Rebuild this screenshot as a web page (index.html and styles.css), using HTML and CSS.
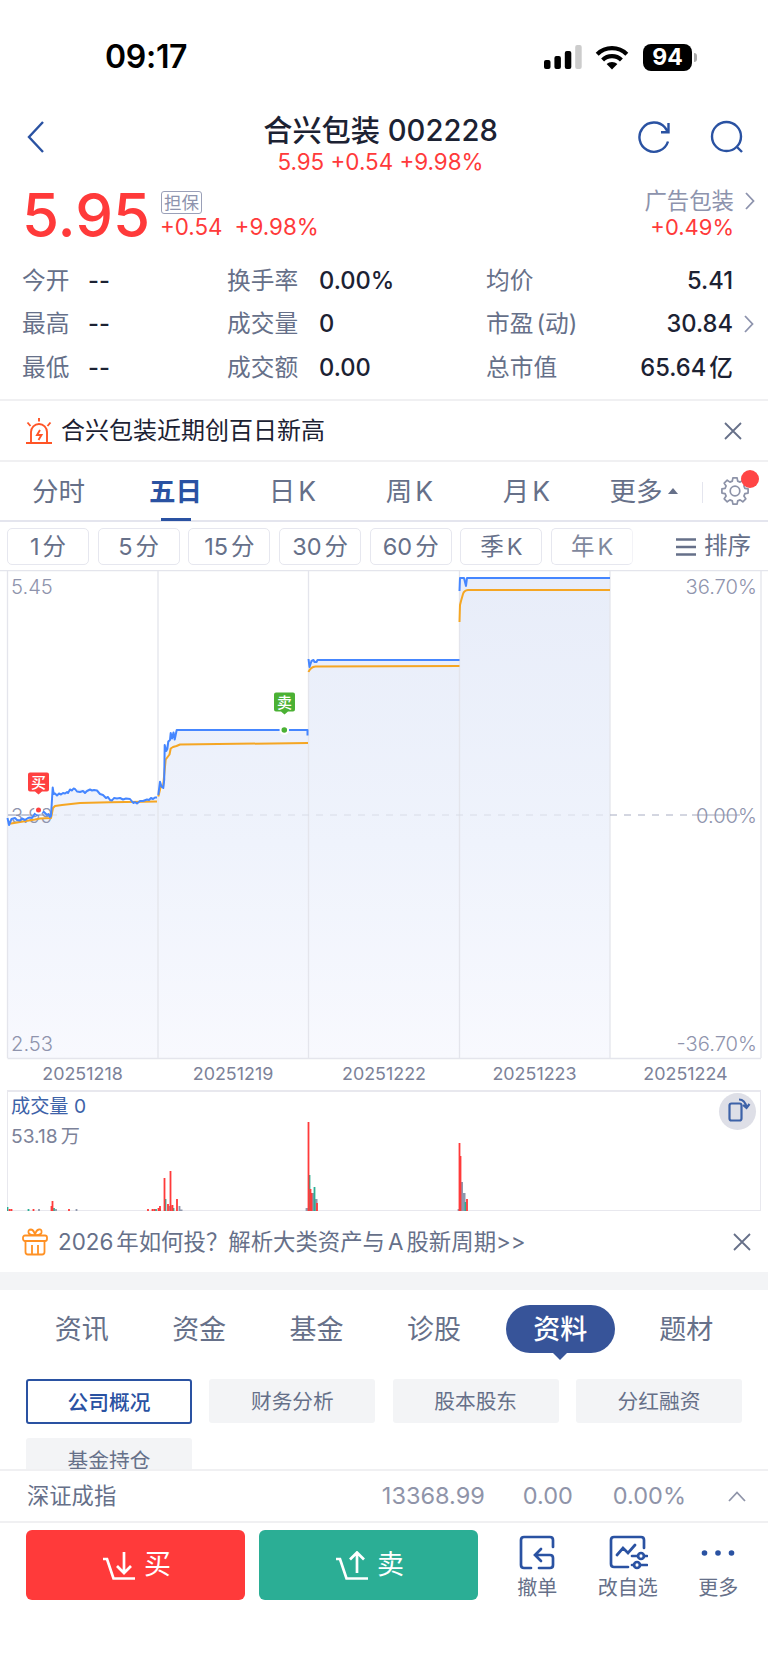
FILE: index.html
```html
<!DOCTYPE html>
<html lang="zh-CN">
<head>
  <meta charset="UTF-8" />
  <meta name="viewport" content="width=device-width, initial-scale=1.0" />
  <title>合兴包装 002228</title>
  <link rel="stylesheet" href="styles.css">
</head>
<body>
  <div class="status-bar">
    <span class="time">09:17</span>
    <svg class="signal" width="38" height="24" viewBox="0 0 38 24">
      <rect x="0" y="15" width="6.5" height="9" rx="2" />
      <rect x="10.4" y="11" width="6.5" height="13" rx="2" />
      <rect x="20.8" y="6" width="6.5" height="18" rx="2" />
      <rect x="31.2" y="0" width="6.5" height="24" rx="2" fill="#ccc" />
    </svg>
    <svg class="wifi" width="34" height="25" viewBox="0 0 34 25">
      <path d="M2.2 9.3a21 21 0 0 1 29.6 0M7.6 15a13.5 13.5 0 0 1 18.8 0" fill="none" stroke="#000" stroke-width="4.2" />
      <path d="M11.6 19a8 8 0 0 1 10.8 0L17 24.6z" />
    </svg>
    <span class="battery">94</span>
  </div>

  <header class="header">
    <svg width="18" height="34" viewBox="0 0 18 34"><path d="M16 2L2 17l14 15" /></svg>
    <div class="title">
      <h1>合兴包装 002228</h1>
      <p>5.95 +0.54 +9.98%</p>
    </div>
    <svg class="refresh" width="34" height="34" viewBox="0 0 34 34"><path d="M31 21.5A14.6 14.6 0 1 1 28 7.5L31 12M31.5 3v9.3H24" /></svg>
    <svg width="34" height="34" viewBox="0 0 34 34"><circle cx="16.5" cy="16.5" r="14.5" /><path d="M27 27l5 5" /></svg>
  </header>

  <section class="quote">
    <div class="price">5.95</div>
    <div class="change">
      <span class="tag">担保</span>
      <div><span>+0.54</span><span>+9.98%</span></div>
    </div>
    <div class="sector">
      <span class="name">广告包装</span>
      <span class="up">+0.49%</span>
    </div>
    <svg class="chevron" width="10" height="18" viewBox="0 0 10 18"><path d="M1 1l7.5 8L1 17" /></svg>
  </section>

  <section class="stats">
    <span>今开</span><b class="dash">--</b><span>换手率</span><b>0.00%</b><span>均价</span><b class="right">5.41</b><i></i>
    <span>最高</span><b class="dash">--</b><span>成交量</span><b>0</b><span>市盈<u>(动)</u></span><b class="right">30.84</b>
    <svg class="chevron" width="10" height="18" viewBox="0 0 10 18"><path d="M1 1l7.5 8L1 17" /></svg>
    <span>最低</span><b class="dash">--</b><span>成交额</span><b>0.00</b><span>总市值</span><b class="right">65.64<em>亿</em></b><i></i>
  </section>

  <section class="notice">
    <svg width="28" height="28" viewBox="0 0 28 28" fill="none" stroke="#ff5426" stroke-width="1.9">
      <path d="M1 26h26M6 26V15a8 8 0 0 1 16 0V26M14 1v3.5M2.5 5.5l3 3.5M25.5 5.5l-3 3.5" />
      <path d="M15 13l-3 5h4.5l-3 5" />
    </svg>
    <span>合兴包装近期创百日新高</span>
    <svg class="close" width="18" height="18" viewBox="0 0 18 18"><path d="M1 1l16 16M17 1L1 17" /></svg>
  </section>

  <nav class="chart-tabs">
    <span>分时</span>
    <span class="active">五日</span>
    <span>日<u>K</u></span>
    <span>周<u>K</u></span>
    <span>月<u>K</u></span>
    <span class="more">更多</span>
    <svg class="gear" width="30" height="30" viewBox="-15 -15 30 30">
      <path d="M-2.7-9.9L-2.1-13.1H2.1L2.7-9.9 5.1-8.9 7.8-10.8 10.8-7.8 8.9-5.1 9.9-2.7 13.1-2.1V2.1L9.9 2.7 8.9 5.1 10.8 7.8 7.8 10.8 5.1 8.9 2.7 9.9 2.1 13.1H-2.1L-2.7 9.9-5.1 8.9-7.8 10.8-10.8 7.8-8.9 5.1-9.9 2.7-13.1 2.1V-2.1L-9.9-2.7-8.9-5.1-10.8-7.8-7.8-10.8-5.1-8.9z" />
      <circle r="4.8" />
    </svg>
  </nav>

  <div class="periods">
    <span>1<u>分</u></span>
    <span>5<u>分</u></span>
    <span>15<u>分</u></span>
    <span>30<u>分</u></span>
    <span>60<u>分</u></span>
    <span>季<u>K</u></span>
    <span class="faded">年<u>K</u></span>
    <div class="sort">
      <svg width="20" height="18" viewBox="0 0 20 18"><path d="M0 1.5h20M0 9h20M0 16.5h20" /></svg>
      排序
    </div>
  </div>

  <!-- five day price chart -->
  <svg class="chart" width="768" height="521" viewBox="0 570 768 521">
    <defs>
      <linearGradient id="area" gradientUnits="userSpaceOnUse" x1="0" y1="580" x2="0" y2="1058">
        <stop offset="0" stop-color="#e8edf9" />
        <stop offset="0.55" stop-color="#eff3fc" />
        <stop offset="1" stop-color="#f8f9fe" />
      </linearGradient>
    </defs>
    <path fill="url(#area)" d="M8 1058V820L30 818 50 817 52.7 790 57 795 75 789 97 790.5 106 798 135 802 157 797.5 163.3 788 165 747 168 742 176.7 730H308.5V660H459.5V578H610V1058z" />
    <path class="grid" d="M7.5 571V1058M158 571V1058M308.5 571V1058M459.5 571V1058M610 571V1058M761 571V1058M7.5 1058.5H761M0 570.5H768" />
    <path class="zero" d="M8 815H610" stroke="#d8dce7" stroke-dasharray="7 7" />
    <path class="zero" d="M610 815H690" stroke="#a8adc2" stroke-dasharray="7 7" />
    <path class="zero" d="M692 815H740M8 815h42" stroke="#a0a5ba" />
    <g class="axis">
      <text x="11" y="593.5">5.45</text>
      <text x="11" y="822.5">3.99</text>
      <text x="11" y="1051">2.53</text>
      <text x="757" y="593.5" text-anchor="end">36.70%</text>
      <text x="757" y="822.5" text-anchor="end">0.00%</text>
      <text x="757" y="1051" text-anchor="end">-36.70%</text>
    </g>
    <g class="avg">
      <path d="M8 824L20 822 35 819.5 40 818.5 51 818 53 808 55 806 62 805 80 803 110 802.3 157 801.5" />
      <path d="M158.3 796.5L161 786 163 787 165.7 759.5 169.5 754.5 170.7 748.5 173 747 176.5 746 180 744.5 308 743" />
      <path d="M308.5 672q2-5 7-5.5l144-.5M459.5 622l.5-17 1-4 2-7q1-3.5 5-4H610" />
    </g>
    <g class="line">
      <path d="M7.5 818L9 825 11.5 819 15 818 17 820 20 820.5 22 818.5 25 820 28 818 30 817.5 32 818 35 813.5 37 815 39 814 42 812 44 812 47 815 48.5 814 50 817 51 816 52.7 787.5 53.7 794 55 793.5 57 795.5 59 793.5 61 794.5 63 793 65 793.5 67 792 68 793 70 789.5 72 790.5 73.5 788.5 75 789 77 791.5 80 792 83 791 85 793 87 791 90 789.5 92 790.5 94 790 97 790.5 100 794 103 795 106 798 108 797 110 800 112 800.5 114 798 117 798.5 120 798 123 799.5 126 798.5 130 799 132 801.5 133.5 803 135 802 137 803.5 140 801 143 801 147 799.5 149 800 151 798 153 799 155 797.5 157 797.5" />
      <path d="M158.3 795L160 781.7 161.5 786.5 163.3 788 164.2 780 164.7 745 166.2 751 167.3 749 168.3 741.5 170 740 170.7 733 172 738.5 173.5 732.5 174.7 739.5 176.7 730H307.5V735.6" />
      <path d="M308.5 659l1 8 2-6 2-1 1 2h2l1-2H459.5M459.5 591l.5-13H464l2 8 1-8H610" />
    </g>
    <g class="marker buy">
      <path d="M30 772.5h17a2 2 0 0 1 2 2v15a2 2 0 0 1-2 2h-5l-3.5 3-3.5-3h-5a2 2 0 0 1-2-2v-15a2 2 0 0 1 2-2z" />
      <circle cx="38.5" cy="810" r="3.5" />
      <text x="38.5" y="788">买</text>
    </g>
    <g class="marker sell">
      <path d="M276 692.5h17a2 2 0 0 1 2 2v15a2 2 0 0 1-2 2h-5l-3.5 3-3.5-3h-5a2 2 0 0 1-2-2v-15a2 2 0 0 1 2-2z" />
      <circle cx="284.3" cy="730" r="3.8" />
      <text x="284.5" y="708">卖</text>
    </g>
    <g class="dates">
      <text x="82.5" y="1079.5">20251218</text>
      <text x="233" y="1079.5">20251219</text>
      <text x="384" y="1079.5">20251222</text>
      <text x="534.5" y="1079.5">20251223</text>
      <text x="685.5" y="1079.5">20251224</text>
    </g>
  </svg>

  <div class="volume">
    <p class="vol-now">成交量 0</p>
    <p>53.18<u>万</u></p>
    <svg class="bars" width="754" height="121" viewBox="7 1090 754 121">
      <g stroke="#8f98ad">
        <path d="M39 1211v-2M76.5 1211v-2M56 1211v-2M179.5 1211v-5M306.5 1211v-3M308 1211v-3M458.5 1211v-2" />
        <path stroke-width="3" d="M313 1211v-18M316 1211v-12M461.5 1211v-29M464 1211v-18M170 1211v-5M181 1211v-1.5" />
      </g>
      <g stroke="#2bae95">
        <path d="M7.5 1211v-4M28.5 1211v-2M54 1211v-3M156 1211v-2M160 1211v-2M165.5 1211v-12M173.5 1211v-3M309.5 1211v-36M314.5 1211v-24M465.5 1211v-9" />
      </g>
      <g stroke="#ff3a3a">
        <path d="M9.5 1211v-2M11.5 1211v-2M33.5 1211v-2M52.5 1211v-10M51.5 1211v-5M69 1211v-2M148 1211v-2M152.5 1211v-2M154.5 1211v-2M158.5 1211v-3M160 1211v-5M164.5 1211v-33M168 1211v-7M170.5 1211v-40M172.5 1211v-6M177 1211v-12M308.5 1211v-89M310.5 1211v-22M311.5 1211v-18M317 1211v-8M459.5 1211v-68M460.5 1211v-55M467 1211v-12" />
      </g>
    </svg>
    <span class="rotate">
      <svg width="26" height="26" viewBox="0 0 26 26"><rect x="3.5" y="5.5" width="12" height="17" rx="2" /><path d="M13 1.5q6 0 7.5 8M17 7l3.5 3 3-4" /></svg>
    </span>
  </div>

  <section class="promo">
    <svg width="26" height="28" viewBox="0 0 26 28" fill="none" stroke="#ff9124" stroke-width="1.8">
      <rect x="1" y="7.5" width="24" height="5.5" rx="2" />
      <path d="M3.5 13v11q0 2.5 2.5 2.5h14q2.5 0 2.5-2.5V13M10 17v9M16 17v9M13 7Q7 7.5 6.5 4.5T9 1.5Q12 2 13 7Q14 2 17 1.5T19.5 4.5Q19 7.5 13 7" />
    </svg>
    <span>2026<u>年如何投？解析大类资产与</u><u>A</u><u>股新周期</u>&gt;&gt;</span>
    <svg class="close" width="18" height="18" viewBox="0 0 18 18"><path d="M1 1l16 16M17 1L1 17" /></svg>
  </section>

  <nav class="info-tabs">
    <span>资讯</span>
    <span>资金</span>
    <span>基金</span>
    <span>诊股</span>
    <span class="active">资料</span>
    <span>题材</span>
  </nav>

  <div class="chips">
    <span class="active">公司概况</span>
    <span>财务分析</span>
    <span>股本股东</span>
    <span>分红融资</span>
    <span>基金持仓</span>
  </div>

  <div class="index-bar">
    <span class="name">深证成指</span>
    <span class="num">13368.99</span>
    <span class="num">0.00</span>
    <span class="num">0.00%</span>
    <svg width="18" height="11" viewBox="0 0 18 11"><path d="M1 10l8-8.5 8 8.5" /></svg>
  </div>

  <footer class="toolbar">
    <button class="btn buy">
      <svg width="34" height="30" viewBox="0 0 34 30"><path d="M1 8h4l6.5 19.5H33M22 1v20M15 15l7 7 7-7" /></svg>
      买
    </button>
    <button class="btn sell">
      <svg width="34" height="30" viewBox="0 0 34 30"><path d="M1 8h4l6.5 19.5H33M22 22V2M15 8.5l7-7 7 7" /></svg>
      卖
    </button>
    <div class="action">
      <svg width="38" height="36" viewBox="0 0 38 36"><path d="M13 33H6q-3 0-3-3V5q0-3 3-3h26q3 0 3 3v7M21 33h11q3 0 3-3v-7q0-3-3-3H18M23 14l-6 6 6 6" /></svg>
      撤单
    </div>
    <div class="action">
      <svg width="40" height="36" viewBox="0 0 40 36"><path d="M20 32H6q-3 0-3-3V5q0-3 3-3h27q3 0 3 3v8M9 20l6-7 5 5 7-8M24 21h6M36 21h3M24 30h2M32 30h7" /><circle cx="33" cy="21" r="3" /><circle cx="29" cy="30" r="3" /></svg>
      改自选
    </div>
    <div class="action">
      <svg class="dots" width="36" height="36" viewBox="0 0 36 36"><circle cx="4.5" cy="18" r="2.8" /><circle cx="18" cy="18" r="2.8" /><circle cx="31.5" cy="18" r="2.8" /></svg>
      更多
    </div>
  </footer>
</body>
</html>
```
FILE: styles.css
```css
* {
  box-sizing: border-box;
}
body {
  margin: 0;
  height: 1669px;
  overflow: hidden;
  background: #fff;
  color: #1c2233;
  font-family: Inter, "Noto Sans CJK SC", sans-serif;
  line-height: 1.2;
  display: flex;
  flex-direction: column;
}
body > * {
  flex: none;
}
svg {
  display: block;
  flex: none;
}
h1, p {
  margin: 0;
}
u {
  text-decoration: none;
  margin-left: 3px;
}

/* status bar */
.status-bar {
  height: 114px;
  padding: 0 71px 0 105px;
  display: flex;
  align-items: center;
}
.time {
  font-size: 32px;
  font-weight: 600;
  color: #000;
  letter-spacing: -0.3px;
  margin: 1px auto 0 0;
}
.wifi {
  margin: 0 14px 0 13px;
}
.battery {
  position: relative;
  width: 49px;
  height: 27px;
  line-height: 27px;
  margin-right: 5px;
  border-radius: 8px;
  background: #000;
  color: #fff;
  font-size: 23px;
  font-weight: 700;
  text-align: center;
}
.battery::after {
  content: "";
  position: absolute;
  right: -5px;
  top: 9px;
  width: 3px;
  height: 9px;
  border-radius: 0 4px 4px 0;
  background: #aaa;
}

/* header */
.header {
  height: 70px;
  padding: 6px 24px 0 27px;
  display: flex;
  align-items: flex-start;
}
.header svg {
  fill: none;
  stroke: #2a52a2;
  stroke-width: 2.4;
}
.title {
  flex: 1;
  margin: -9px 0 0 79px;
  text-align: center;
}
.title h1 {
  font-size: 29.2px;
  line-height: 39px;
  font-weight: 500;
}
.title p {
  font-size: 22.4px;
  line-height: 23px;
  color: #ff3a3a;
}
.header .refresh {
  margin-right: 39px;
}

/* quote */
.quote {
  height: 74px;
  padding: 0 13px 0 22px;
  display: flex;
  align-items: flex-start;
  color: #ff3a3a;
}
.price {
  font-size: 60px;
  line-height: 63px;
  font-weight: 500;
  width: 138px;
}
.change {
  font-size: 22.4px;
  line-height: 26px;
}
.change span + span {
  margin-left: 12px;
}
.tag {
  display: block;
  width: 41px;
  height: 23px;
  margin: 7px 0 0 1px;
  border: 1px solid #9aa0b8;
  border-radius: 3px;
  color: #8d93ad;
  font-size: 17.5px;
  line-height: 21px;
  text-align: center;
}
.sector {
  margin: 4px 11px 0 auto;
  text-align: right;
  font-size: 22.4px;
  line-height: 26px;
}
.sector span {
  display: block;
}
.sector .up {
  font-size: 22px;
}
.sector .name {
  color: #8d93ad;
}
.chevron {
  fill: none;
  stroke: #8d93ad;
  stroke-width: 1.8;
}
.quote .chevron {
  margin-top: 8px;
}

/* stats */
.stats {
  height: 143px;
  padding: 1px 14px 0 22px;
  display: grid;
  grid-template-columns: 66px 139px 92px 167px 120px 127px 21px;
  grid-template-rows: repeat(3, 43.5px);
  align-items: center;
  font-size: 23.7px;
  color: #667089;
  border-bottom: 2px solid #f0f0f2;
}
.stats b {
  font-weight: 500;
  color: #1c2233;
}
.stats .right {
  text-align: right;
}
.stats em {
  font-style: normal;
  margin-left: 3px;
}
.stats .chevron {
  justify-self: end;
}

/* notice */
.notice {
  height: 61px;
  padding: 1px 26px 0 25px;
  display: flex;
  align-items: center;
  font-size: 24px;
  border-bottom: 2px solid #f0f0f2;
}
.notice span {
  margin-left: 8px;
}
.close {
  margin-left: auto;
  fill: none;
  stroke: #667089;
  stroke-width: 1.8;
}

/* chart tabs */
.chart-tabs {
  height: 60px;
  padding: 2px 18px 0 0;
  display: grid;
  grid-template-columns: 117px 117px 117px 117px 117px 117px 1fr;
  align-items: center;
  justify-items: center;
  font-size: 26.5px;
  color: #667089;
  border-bottom: 2px solid #e4e5ee;
  position: relative;
}
.chart-tabs .active {
  position: relative;
  color: #2a52a2;
  font-weight: 700;
}
.chart-tabs .active::after {
  content: "";
  position: absolute;
  left: 12px;
  bottom: -13px;
  width: 30px;
  height: 3px;
  background: #2a52a2;
}
.more::after {
  content: "";
  display: inline-block;
  margin: 0 0 7px 5px;
  border: 5.5px solid transparent;
  border-top: 0;
  border-bottom: 6px solid #667089;
}
.gear {
  justify-self: end;
  margin-top: -2px;
  fill: none;
  stroke: #8d93a8;
  stroke-width: 1.7;
  stroke-linejoin: round;
}
.chart-tabs::before {
  content: "";
  position: absolute;
  left: 702px;
  top: 20px;
  width: 1px;
  height: 21px;
  background: #e4e5ee;
}
.chart-tabs::after {
  content: "";
  position: absolute;
  right: 9px;
  top: 8px;
  width: 18px;
  height: 18px;
  border-radius: 50%;
  background: #ff4545;
}

/* periods */
.periods {
  height: 48px;
  padding: 0 17px 0 7px;
  display: flex;
  align-items: center;
  gap: 8.7px;
  font-size: 23.5px;
  color: #667089;
}
.periods > span {
  width: 82px;
  height: 37px;
  line-height: 35px;
  border: 1.5px solid #e6e7ef;
  border-radius: 5px;
  text-align: center;
}
.periods .faded {
  color: #7f889d;
  border-right-color: #f3f3f7;
}
.sort {
  margin: 1px 0 0 auto;
  display: flex;
  align-items: center;
  gap: 8px;
}
.sort svg {
  stroke: #667089;
  stroke-width: 2.4;
}

/* chart */
.chart path {
  stroke-linejoin: round;
}
.grid {
  fill: none;
  stroke: #e4e5ec;
  stroke-width: 1.3;
}
.zero {
  fill: none;
}
.axis {
  font-size: 20.2px;
  font-weight: 300;
  fill: #8f94ad;
}
.dates {
  font-size: 17.9px;
  fill: #7c8299;
  text-anchor: middle;
}
.avg, .line {
  fill: none;
  stroke: #f5a623;
  stroke-width: 2;
}
.line {
  stroke: #4586ff;
}
.marker text {
  font-size: 15px;
  font-weight: 500;
  fill: #fff;
  text-anchor: middle;
}
.marker circle {
  stroke: #fff;
  stroke-width: 2;
}
.marker.buy {
  fill: #ff4040;
}
.marker.sell {
  fill: #4bb134;
}

/* volume */
.volume {
  position: relative;
  height: 121px;
  margin: -1px 7px 0;
  padding: 2px 3px;
  border: 1px solid #e8e8ee;
  border-top-width: 2px;
  font-size: 19.2px;
  color: #7c8299;
}
.volume p {
  height: 30px;
  line-height: 24px;
}
.volume .vol-now {
  color: #3d62a8;
}
.bars {
  position: absolute;
  left: -1px;
  top: -2px;
  stroke-width: 1.8;
}
.rotate {
  position: absolute;
  right: 4px;
  top: 1px;
  width: 37px;
  height: 37px;
  padding: 5px 4px 0 7px;
  border-radius: 50%;
  background: #dedfe7;
}
.rotate svg {
  fill: none;
  stroke: #3d62a8;
  stroke-width: 2.2;
}

/* promo */
.promo {
  height: 61px;
  padding: 1px 17px 0 22px;
  display: flex;
  align-items: center;
  font-size: 22.4px;
  color: #667089;
}
.promo span {
  margin-left: 10px;
}

/* info tabs */
.info-tabs {
  height: 107px;
  padding: 15px 23px 0;
  border-top: 18px solid #f3f4f6;
  display: flex;
  font-size: 27px;
  line-height: 50px;
  color: #667089;
}
.info-tabs span {
  width: 117.5px;
  text-align: center;
}
.info-tabs .active {
  position: relative;
  width: 109px;
  height: 48px;
  margin: 0 13px;
  border-radius: 24px;
  background: #375499;
  color: #fff;
  font-weight: 500;
}
.info-tabs .active::after {
  content: "";
  position: absolute;
  left: 47px;
  bottom: -7px;
  border: 7px solid transparent;
  border-bottom: 0;
  border-top-color: #375499;
}

/* chips */
.chips {
  height: 90px;
  overflow: hidden;
  padding: 0 26px;
  display: grid;
  grid-template-columns: repeat(4, 166px);
  grid-auto-rows: 44px;
  justify-content: space-between;
  row-gap: 15px;
  font-size: 20.7px;
  line-height: 45px;
  text-align: center;
  color: #667089;
}
.chips span {
  background: #f3f4f6;
  border-radius: 3px;
}
.chips .active {
  height: 45px;
  background: #fff;
  border: 2px solid #2a52a2;
  line-height: 44px;
  color: #2a52a2;
  font-weight: 500;
}

/* index bar */
.index-bar {
  height: 54px;
  padding: 0 22px 0 27px;
  border-top: 2px solid #f0f0f2;
  border-bottom: 2px solid #f0f0f2;
  display: flex;
  align-items: center;
  font-size: 22.3px;
  color: #8f94a9;
}
.index-bar .name {
  color: #667089;
  margin-right: auto;
}
.index-bar .num {
  font-size: 23.5px;
  margin-right: 40px;
}
.index-bar .num:nth-child(4) {
  margin-right: 42px;
}
.index-bar .num:nth-child(2) {
  margin-right: 38px;
}
.index-bar svg {
  fill: none;
  stroke: #8f94a9;
  stroke-width: 1.8;
}

/* toolbar */
.toolbar {
  padding: 7px 0 0 26px;
  display: flex;
}
.btn {
  width: 219px;
  height: 70px;
  margin: 0 14px 0 0;
  padding: 1px 0 0 2px;
  border: none;
  border-radius: 6px;
  color: #fff;
  font: inherit;
  font-size: 27px;
  display: flex;
  align-items: center;
  justify-content: center;
  gap: 8px;
}
.btn svg, .action svg {
  fill: none;
  stroke: #fff;
  stroke-width: 2.7;
}
.btn.buy {
  background: #ff3a3a;
}
.btn.sell {
  background: #2bae95;
}
.action {
  width: 90.5px;
  display: flex;
  flex-direction: column;
  align-items: center;
  font-size: 20px;
  line-height: 28px;
  color: #667089;
  padding-top: 5px;
}
.action svg {
  stroke: #2a52a2;
  stroke-linecap: round;
  margin-bottom: 3px;
}
.action .dots {
  fill: #2a52a2;
  stroke: none;
}
```
